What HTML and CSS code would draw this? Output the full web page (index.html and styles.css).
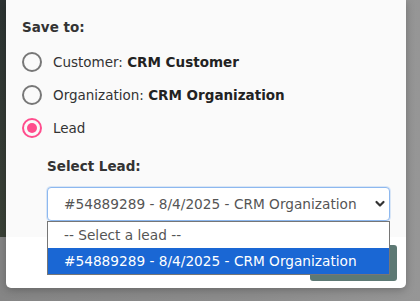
FILE: index.html
```html
<!DOCTYPE html>
<html>
<head>
<meta charset="utf-8">
<title>Save to</title>
<link rel="stylesheet" href="styles.css">
</head>
<body>
    <div class="modal">
        <div class="modal-body">
            <div class="section-title">Save to:</div>
            <div class="radio-row">
                <span class="radio"></span>
                <span class="radio-label">Customer: <b>CRM Customer</b></span>
            </div>
            <div class="radio-row">
                <span class="radio"></span>
                <span class="radio-label">Organization: <b>CRM Organization</b></span>
            </div>
            <div class="radio-row">
                <span class="radio checked"></span>
                <span class="radio-label">Lead</span>
            </div>
            <div class="lead-picker">
                <div class="field-label">Select Lead:</div>
                <div class="select-wrap">
                    <div class="select-box">
                        <span>#54889289 - 8/4/2025 - CRM Organization</span>
                        <svg class="chevron" width="12" height="8" viewBox="0 0 12 8">
                            <path d="M2.5 2 L6 5.5 L9.5 2" fill="none" stroke="#333" stroke-width="2.2" stroke-linecap="round" stroke-linejoin="round"/>
                        </svg>
                    </div>
                    <div class="select-menu">
                        <div class="option">-- Select a lead --</div>
                        <div class="option selected">#54889289 - 8/4/2025 - CRM Organization</div>
                    </div>
                </div>
            </div>
        </div>
        <div class="modal-footer">
            <!-- label hidden under the open dropdown -->
            <button type="button" class="save-button"></button>
        </div>
    </div>
</body>
</html>
```

FILE: styles.css
```css
:root {
    --text-color: #333;
    --muted-text: #555;
    --radio-grey: #777;
    --accent-pink: #ff4d8d;
    --focus-blue: #8db8ef;
    --option-blue: #1a67d4;
    --button-color: #5d7974;
}

body {
    margin: 0;
    height: 301px;
    overflow: hidden;
    font-family: 'DejaVu Sans', sans-serif;
    color: var(--text-color);
    background:
        linear-gradient(#2d3433, #3b4237) 0 0 / 6px 237px no-repeat,
        linear-gradient(90deg, #858585 0%, #8c8c8c 60%, #969696 100%);
}

.modal {
    margin-left: 6px;
    width: 400px;
    background-color: #ffffff;
    border-radius: 0 0 5px 5px;
    box-shadow: 0 2px 8px rgba(0, 0, 0, 0.25);
}

.modal-body {
    background-color: #fafafa;
    padding: 19px 16px 16px 16px;
    height: 202px;
}

.section-title {
    font-weight: bold;
    font-size: 13.5px;
    margin-bottom: 10px;
}

.radio-row {
    display: flex;
    align-items: center;
    gap: 11px;
    height: 33px;
    font-size: 13.5px;
}

.radio {
    width: 16px;
    height: 16px;
    border: 2px solid var(--radio-grey);
    border-radius: 50%;
    box-sizing: content-box;
    position: relative;
}

.radio.checked {
    border-color: var(--accent-pink);
}

.radio.checked::after {
    content: "";
    position: absolute;
    left: 3px;
    top: 3px;
    width: 10px;
    height: 10px;
    border-radius: 50%;
    background-color: var(--accent-pink);
}

.radio-label b {
    font-weight: bold;
    color: #222;
}

.lead-picker {
    padding-left: 25px;
    margin-top: 14px;
}

.field-label {
    font-weight: bold;
    font-size: 13.5px;
    margin-bottom: 13px;
}

.select-wrap {
    position: relative;
    width: 343px;
}

.select-box {
    display: flex;
    align-items: center;
    justify-content: space-between;
    height: 34px;
    box-sizing: border-box;
    padding: 0 3px 0 16px;
    border: 1px solid var(--focus-blue);
    border-radius: 4px;
    background-color: #fff;
    font-size: 13.7px;
    color: var(--muted-text);
    box-shadow: 0 0 0 1px rgba(141, 184, 239, 0.3);
}

.select-menu {
    position: absolute;
    left: 0;
    right: 0;
    top: 34px;
    border: 1px solid #767676;
    background-color: #fff;
    z-index: 2;
}

.option {
    height: 26px;
    line-height: 26px;
    padding-left: 16px;
    font-size: 13.7px;
    color: var(--muted-text);
}

.option.selected {
    background-color: var(--option-blue);
    color: #fff;
}

.modal-footer {
    height: 51px;
    display: flex;
    justify-content: flex-end;
    align-items: center;
    padding-right: 9px;
}

.save-button {
    width: 87px;
    height: 36px;
    border: none;
    border-radius: 3px;
    background-color: var(--button-color);
}
```
